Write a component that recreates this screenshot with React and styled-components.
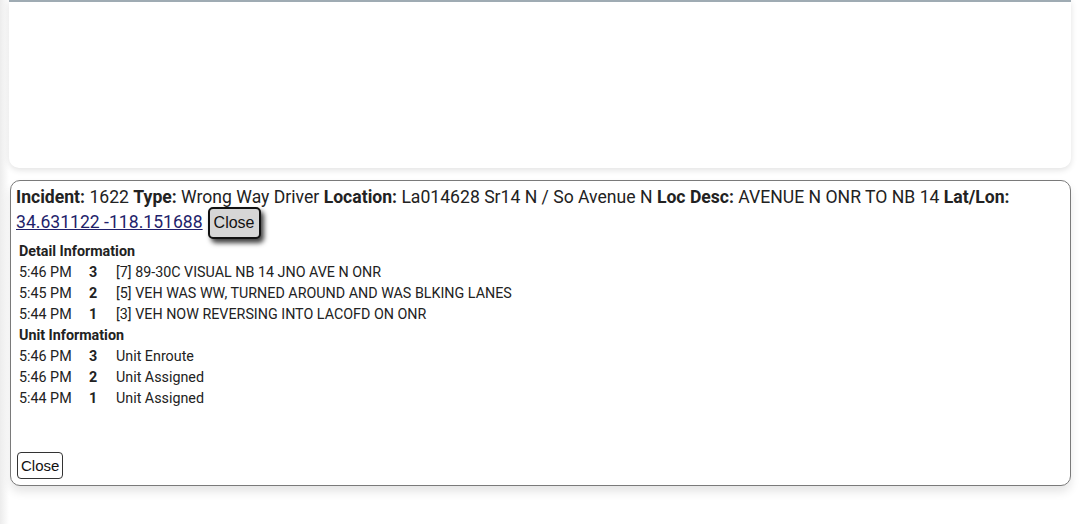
import React from "react";
import styled, { createGlobalStyle } from "styled-components";

const GlobalStyle = createGlobalStyle`
body {
  margin: 0;
  background: #ffffff;
  font-family: Roboto, "Noto Sans", sans-serif;
  color: #222;
}
`;

const Page = styled.div`
width: 1080px;
height: 524px;
overflow: hidden;
background: linear-gradient(to right, #ececec 0px, #ffffff 9px);
padding: 0 9px 0 9px;
box-sizing: border-box;
`;

const MapCard = styled.div`
height: 168px;
background: #ffffff;
border-top: 2px solid #9fabb3;
border-radius: 0 0 10px 10px;
box-shadow: 0 2px 6px rgba(0, 0, 0, 0.12);
box-sizing: border-box;
`;

const Panel = styled.div`
margin: 12px 0 0 1px;
height: 306px;
box-sizing: border-box;
border: 1.5px solid #7a7a7a;
border-radius: 10px;
background: #ffffff;
box-shadow: 0 6px 10px rgba(0, 0, 0, 0.1);
padding: 0 5px 6px 5px;
display: flex;
flex-direction: column;
`;

const Summary = styled.div`
font-size: 17.6px;
line-height: 25px;
color: #222;
padding-top: 4px;
`;

const Label = styled.b`
font-weight: 700;
`;

const CoordLink = styled.a`
color: #1f1f6b;
text-decoration: underline;
`;

const InlineClose = styled.button`
font-family: "Liberation Sans", Arial, sans-serif;
font-size: 16px;
height: 32px;
padding: 0 4px;
margin: -4px 0 -4px 5px;
background: #d6d6d6;
color: #111;
border: 2.5px solid #111;
border-radius: 5px;
box-shadow: 3px 4px 5px rgba(0, 0, 0, 0.75);
vertical-align: middle;
`;

const Section = styled.div`
padding-left: 3px;
font-size: 14.3px;
line-height: 21px;
margin-top: 6px;
`;

const SectionTitle = styled.div`
font-weight: 700;
`;

const Row = styled.div`
display: grid;
grid-template-columns: 70px 27px auto;
`;

const Num = styled.span`
font-weight: 700;
`;

const Spacer = styled.div`
flex: 1;
`;

const FooterClose = styled.button`
align-self: flex-start;
margin-left: 1px;
font-family: "Liberation Sans", Arial, sans-serif;
font-size: 15px;
height: 27px;
padding: 0 3px;
background: #ffffff;
color: #111;
border: 1.5px solid #333;
border-radius: 4px;
`;

const details = [
  ["5:46 PM", "3", "[7] 89-30C VISUAL NB 14 JNO AVE N ONR"],
  ["5:45 PM", "2", "[5] VEH WAS WW, TURNED AROUND AND WAS BLKING LANES"],
  ["5:44 PM", "1", "[3] VEH NOW REVERSING INTO LACOFD ON ONR"],
];

const units = [
  ["5:46 PM", "3", "Unit Enroute"],
  ["5:46 PM", "2", "Unit Assigned"],
  ["5:44 PM", "1", "Unit Assigned"],
];

const App = () => {
  return (
    <>
      <GlobalStyle />
      <Page>
        <MapCard />
        <Panel>
          <Summary>
            <Label>Incident:</Label> 1622 <Label>Type:</Label> Wrong Way Driver{" "}
            <Label>Location:</Label> La014628 Sr14 N / So Avenue N{" "}
            <Label>Loc Desc:</Label> AVENUE N ONR TO NB 14 <Label>Lat/Lon:</Label>{" "}
            <CoordLink href="#">34.631122 -118.151688</CoordLink>
            <InlineClose>Close</InlineClose>
          </Summary>
          <Section>
            <SectionTitle>Detail Information</SectionTitle>
            {details.map((d, i) => (
              <Row key={i}>
                <span>{d[0]}</span>
                <Num>{d[1]}</Num>
                <span>{d[2]}</span>
              </Row>
            ))}
            <SectionTitle>Unit Information</SectionTitle>
            {units.map((d, i) => (
              <Row key={i}>
                <span>{d[0]}</span>
                <Num>{d[1]}</Num>
                <span>{d[2]}</span>
              </Row>
            ))}
          </Section>
          <Spacer />
          <FooterClose>Close</FooterClose>
        </Panel>
      </Page>
    </>
  );
};

export default App;
